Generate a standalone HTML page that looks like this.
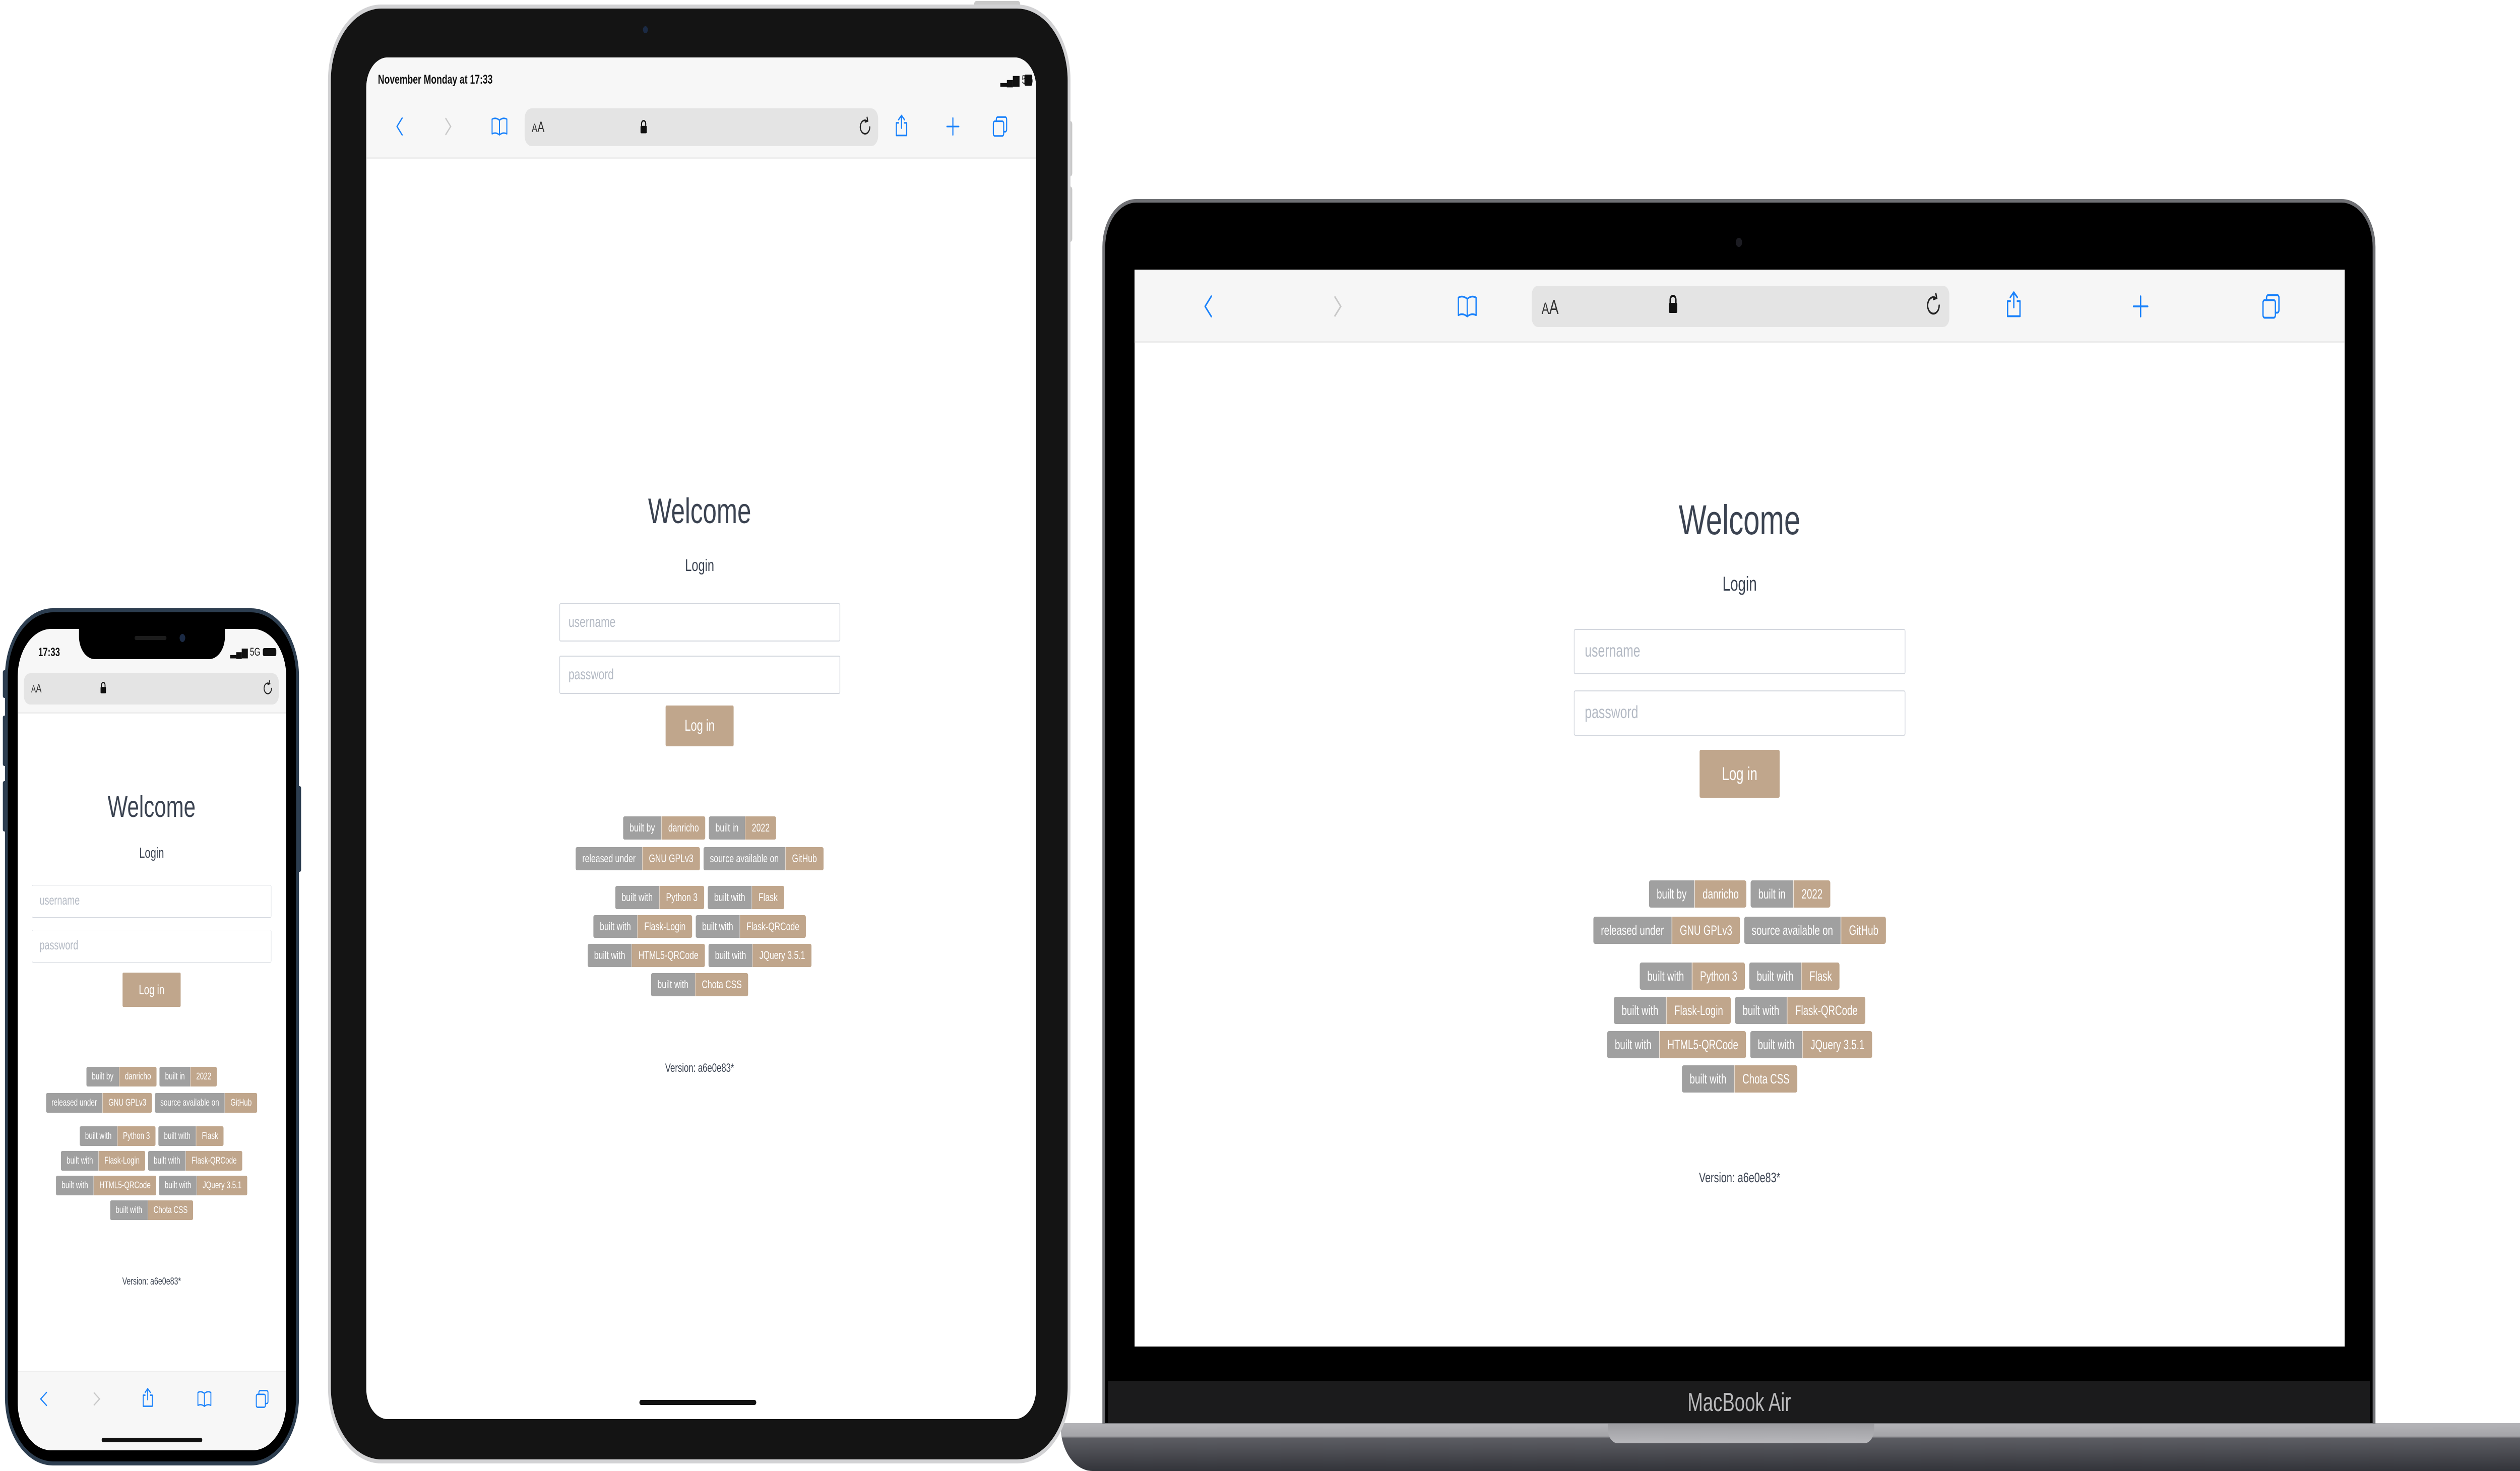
<!DOCTYPE html>
<html><head><meta charset="utf-8">
<style>
*{box-sizing:border-box;margin:0;padding:0}
html,body{width:100%;height:100%;background:#fff;overflow:hidden;font-family:"Liberation Sans",sans-serif}
#wrap{position:absolute;left:0;top:0;width:7114px;height:2919px;overflow:hidden;transform-origin:0 0}
.abs{position:absolute}
.app{position:absolute;width:calc(var(--u)*26);margin-left:calc(var(--u)*-13);color:#3b4351}
.app .t{position:absolute;left:0;width:100%;text-align:center;line-height:1;white-space:nowrap}
.app .h1{font-size:calc(var(--u)*2.3);top:calc(var(--u)*-1.2)}
.app .h2{font-size:calc(var(--u)*1.1);top:calc(var(--u)*2.95)}
.app .in{position:absolute;left:0;width:100%;height:calc(var(--u)*2.5);border:calc(var(--u)*0.07) solid #d3d7de;border-radius:calc(var(--u)*0.12);font-size:calc(var(--u)*0.98);color:#b4bac4;padding-left:calc(var(--u)*0.8);line-height:calc(var(--u)*2.36)}
.app .btn{position:absolute;left:calc(var(--u)*9.85);width:calc(var(--u)*6.3);height:calc(var(--u)*2.64);top:calc(var(--u)*12.6);background:#c0a68c;color:#fff;border-radius:calc(var(--u)*0.1);text-align:center;font-size:calc(var(--u)*1.02);line-height:calc(var(--u)*2.64)}
.app .row{position:absolute;left:calc(var(--u)*-6);width:calc(var(--u)*38);display:flex;justify-content:center;gap:calc(var(--u)*0.33);height:calc(var(--u)*1.5)}
.b{display:flex;height:100%;border-radius:calc(var(--u)*0.14);overflow:hidden;font-size:calc(var(--u)*0.74);color:#fff;line-height:calc(var(--u)*1.5);white-space:nowrap}
.b span{padding:0 calc(var(--u)*0.6);background:#a0a0a0}
.b span+span{background:#c0a68c;border-left:calc(var(--u)*0.06) solid #ece4dc}
.app .ver{font-size:calc(var(--u)*0.78);top:calc(var(--u)*35.8)}
svg{position:absolute;overflow:visible}
.ic{fill:none;stroke:#1a82fb;stroke-linecap:round;stroke-linejoin:round}
</style></head><body><div id="wrap">

<!-- ================= MACBOOK ================= -->
<div class="abs" style="left:2994px;top:2824px;width:4120px;height:95px;border-radius:0 0 0 90px;background:linear-gradient(#b4b4b8 0,#a4a4a8 26px,#5c5d63 30px,#4a4b51 60px,#33343a 95px)"></div>
<div class="abs" style="left:4539px;top:2824px;width:752px;height:40px;border-radius:0 0 28px 28px;background:linear-gradient(#9c9ca0,#b8b8bc)"></div>
<div class="abs" style="left:3112px;top:395px;width:3594px;height:2430px;border-radius:95px 95px 0 0;background:#6f7074"></div>
<div class="abs" style="left:3120px;top:402px;width:3578px;height:2422px;border-radius:88px 88px 0 0;background:#000"></div>
<div class="abs" style="left:3128px;top:2740px;width:3562px;height:84px;background:#1b1b1c"></div>
<div class="abs" style="left:4600px;top:2748px;width:620px;text-align:center;color:#b9b9bb;font-size:52px;line-height:70px">MacBook Air</div>
<div class="abs" style="left:4900px;top:472px;width:18px;height:18px;border-radius:50%;background:#1c1c22"></div>
<div class="abs" style="left:3203px;top:535px;width:3416px;height:2137px;background:#fff"></div>
<div class="abs" style="left:3203px;top:535px;width:3416px;height:145px;background:#f6f6f6;border-bottom:3px solid #ececec"></div>
<div class="abs" style="left:4324px;top:567px;width:1179px;height:82px;background:#e4e4e4;border-radius:18px"></div>
<div class="abs" style="left:4352px;top:588px;font-size:32px;color:#333">A<span style="font-size:40px">A</span></div>
<svg style="left:4708px;top:585px" width="30" height="38" viewBox="0 0 30 38"><path d="M7 16V10a8 8 0 0 1 16 0v6" fill="none" stroke="#111" stroke-width="4"/><rect x="3" y="16" width="24" height="20" rx="3" fill="#111"/></svg>
<svg style="left:5430px;top:578px" width="56" height="56" viewBox="0 0 24 24"><path d="M19 12a7 7 0 1 1-4-6.3M15 2l1 3.8-3.8 1" fill="none" stroke="#222" stroke-width="1.6" stroke-linecap="round"/></svg>
<svg style="left:3382px;top:578px" width="60" height="60" viewBox="0 0 24 24"><path class="ic" stroke-width="1.5" d="M15 4L8 12l7 8"/></svg>
<svg style="left:3745px;top:578px" width="60" height="60" viewBox="0 0 24 24"><path style="fill:none;stroke:#c8c8c8" stroke-width="1.5" d="M9 4l7 8-7 8"/></svg>
<svg style="left:4110px;top:578px" width="64" height="60" viewBox="0 0 24 24"><path class="ic" stroke-width="1.4" d="M2 5q5-2 10 1q5-3 10-1v14q-5-2-10 1q-5-3-10-1zM12 6v14"/></svg>
<svg style="left:5655px;top:572px" width="60" height="66" viewBox="0 0 24 24"><path class="ic" stroke-width="1.5" d="M8 9H5v12h14V9h-3M12 14V2M8 6l4-4 4 4"/></svg>
<svg style="left:6013px;top:578px" width="60" height="60" viewBox="0 0 24 24"><path class="ic" stroke-width="1.5" d="M12 4v16M4 12h16"/></svg>
<svg style="left:6381px;top:578px" width="60" height="60" viewBox="0 0 24 24"><rect class="ic" stroke-width="1.5" x="3" y="7" width="14" height="14" rx="2"/><path class="ic" stroke-width="1.5" d="M7 7V5a2 2 0 0 1 2-2h10a2 2 0 0 1 2 2v10a2 2 0 0 1-2 2h-2"/></svg>

<div class="app" style="--u:36px;left:4911px;top:1034px">
 <div class="t h1">Welcome</div><div class="t h2">Login</div>
 <div class="in" style="top:calc(var(--u)*5.94)">username</div>
 <div class="in" style="top:calc(var(--u)*9.33)">password</div>
 <div class="btn">Log in</div>
 <div class="row" style="top:calc(var(--u)*19.8)"><div class="b"><span>built by</span><span>danricho</span></div><div class="b"><span>built in</span><span>2022</span></div></div>
 <div class="row" style="top:calc(var(--u)*21.8)"><div class="b"><span>released under</span><span>GNU GPLv3</span></div><div class="b"><span>source available on</span><span>GitHub</span></div></div>
 <div class="row" style="top:calc(var(--u)*24.33)"><div class="b"><span>built with</span><span>Python 3</span></div><div class="b"><span>built with</span><span>Flask</span></div></div>
 <div class="row" style="top:calc(var(--u)*26.22)"><div class="b"><span>built with</span><span>Flask-Login</span></div><div class="b"><span>built with</span><span>Flask-QRCode</span></div></div>
 <div class="row" style="top:calc(var(--u)*28.11)"><div class="b"><span>built with</span><span>HTML5-QRCode</span></div><div class="b"><span>built with</span><span>JQuery 3.5.1</span></div></div>
 <div class="row" style="top:calc(var(--u)*30.0)"><div class="b"><span>built with</span><span>Chota CSS</span></div></div>
 <div class="t ver">Version: a6e0e83*</div>
</div>

<!-- ================= IPAD ================= -->
<div class="abs" style="left:2750px;top:2px;width:130px;height:14px;border-radius:6px;background:#c9c9c9"></div>
<div class="abs" style="left:3015px;top:240px;width:12px;height:110px;border-radius:6px;background:#c9c9c9"></div>
<div class="abs" style="left:3015px;top:370px;width:12px;height:110px;border-radius:6px;background:#c9c9c9"></div>
<div class="abs" style="left:926px;top:9px;width:2096px;height:2895px;border-radius:150px;background:#d2d2d4"></div>
<div class="abs" style="left:934px;top:17px;width:2080px;height:2879px;border-radius:143px;background:#141414"></div>
<div class="abs" style="left:1815px;top:52px;width:14px;height:14px;border-radius:50%;background:#1b2a44"></div>
<div class="abs" style="left:1034px;top:114px;width:1891px;height:2702px;border-radius:60px;background:#fff;overflow:hidden">
 <div class="abs" style="left:0;top:0;width:100%;height:201px;background:#f7f7f7;border-bottom:4px solid #eeeeee"></div>
 <div class="abs" style="left:33px;top:30px;font-size:25px;font-weight:bold;color:#111">November Monday at 17:33</div>
 <div class="abs" style="left:1790px;top:30px;font-size:24px;color:#111">▂▄▆ 5G</div>
 <div class="abs" style="left:1858px;top:34px;width:22px;height:22px;background:#111;border-radius:3px"></div>
 <div class="abs" style="left:447px;top:101px;width:998px;height:75px;background:#e4e4e4;border-radius:20px"></div>
 <div class="abs" style="left:467px;top:122px;font-size:24px;color:#333">A<span style="font-size:30px">A</span></div>
 <svg style="left:772px;top:122px" width="22" height="32" viewBox="0 0 30 38"><path d="M7 16V10a8 8 0 0 1 16 0v6" fill="none" stroke="#111" stroke-width="4"/><rect x="3" y="16" width="24" height="20" rx="3" fill="#111"/></svg>
 <svg style="left:1385px;top:115px" width="46" height="46" viewBox="0 0 24 24"><path d="M19 12a7 7 0 1 1-4-6.3M15 2l1 3.8-3.8 1" fill="none" stroke="#222" stroke-width="1.6" stroke-linecap="round"/></svg>
 <svg style="left:70px;top:112px" width="50" height="50" viewBox="0 0 24 24"><path class="ic" stroke-width="1.5" d="M15 4L8 12l7 8"/></svg>
 <svg style="left:205px;top:112px" width="50" height="50" viewBox="0 0 24 24"><path style="fill:none;stroke:#c8c8c8" stroke-width="1.5" d="M9 4l7 8-7 8"/></svg>
 <svg style="left:350px;top:112px" width="52" height="50" viewBox="0 0 24 24"><path class="ic" stroke-width="1.4" d="M2 5q5-2 10 1q5-3 10-1v14q-5-2-10 1q-5-3-10-1zM12 6v14"/></svg>
 <svg style="left:1486px;top:108px" width="50" height="56" viewBox="0 0 24 24"><path class="ic" stroke-width="1.5" d="M8 9H5v12h14V9h-3M12 14V2M8 6l4-4 4 4"/></svg>
 <svg style="left:1631px;top:112px" width="50" height="50" viewBox="0 0 24 24"><path class="ic" stroke-width="1.5" d="M12 4v16M4 12h16"/></svg>
 <svg style="left:1764px;top:112px" width="50" height="50" viewBox="0 0 24 24"><rect class="ic" stroke-width="1.5" x="3" y="7" width="14" height="14" rx="2"/><path class="ic" stroke-width="1.5" d="M7 7V5a2 2 0 0 1 2-2h10a2 2 0 0 1 2 2v10a2 2 0 0 1-2 2h-2"/></svg>
 <div class="abs" style="left:771px;top:2664px;width:330px;height:10px;border-radius:5px;background:#111"></div>
</div>
<div class="app" style="--u:30.5px;left:1975px;top:1016px">
 <div class="t h1">Welcome</div><div class="t h2">Login</div>
 <div class="in" style="top:calc(var(--u)*5.94)">username</div>
 <div class="in" style="top:calc(var(--u)*9.33)">password</div>
 <div class="btn">Log in</div>
 <div class="row" style="top:calc(var(--u)*19.8)"><div class="b"><span>built by</span><span>danricho</span></div><div class="b"><span>built in</span><span>2022</span></div></div>
 <div class="row" style="top:calc(var(--u)*21.8)"><div class="b"><span>released under</span><span>GNU GPLv3</span></div><div class="b"><span>source available on</span><span>GitHub</span></div></div>
 <div class="row" style="top:calc(var(--u)*24.33)"><div class="b"><span>built with</span><span>Python 3</span></div><div class="b"><span>built with</span><span>Flask</span></div></div>
 <div class="row" style="top:calc(var(--u)*26.22)"><div class="b"><span>built with</span><span>Flask-Login</span></div><div class="b"><span>built with</span><span>Flask-QRCode</span></div></div>
 <div class="row" style="top:calc(var(--u)*28.11)"><div class="b"><span>built with</span><span>HTML5-QRCode</span></div><div class="b"><span>built with</span><span>JQuery 3.5.1</span></div></div>
 <div class="row" style="top:calc(var(--u)*30.0)"><div class="b"><span>built with</span><span>Chota CSS</span></div></div>
 <div class="t ver">Version: a6e0e83*</div>
</div>

<!-- ================= IPHONE ================= -->
<div class="abs" style="left:8px;top:1330px;width:10px;height:55px;border-radius:4px;background:#2c3d50"></div>
<div class="abs" style="left:8px;top:1420px;width:10px;height:100px;border-radius:4px;background:#2c3d50"></div>
<div class="abs" style="left:8px;top:1550px;width:10px;height:100px;border-radius:4px;background:#2c3d50"></div>
<div class="abs" style="left:840px;top:1560px;width:10px;height:170px;border-radius:4px;background:#2c3d50"></div>
<div class="abs" style="left:14px;top:1207px;width:830px;height:1701px;border-radius:135px;background:#2d3e50"></div>
<div class="abs" style="left:22px;top:1215px;width:814px;height:1685px;border-radius:128px;background:#000"></div>
<div class="abs" style="left:50px;top:1248px;width:758px;height:1630px;border-radius:95px;background:#fff;overflow:hidden">
 <div class="abs" style="left:0;top:0;width:100%;height:168px;background:#f7f7f7;border-bottom:3px solid #eee"></div>
 <div class="abs" style="left:173px;top:-5px;width:412px;height:65px;border-radius:0 0 45px 45px;background:#000"></div>
 <div class="abs" style="left:330px;top:14px;width:90px;height:8px;border-radius:4px;background:#1c1c1c"></div>
 <div class="abs" style="left:457px;top:10px;width:16px;height:16px;border-radius:50%;background:#1b2a44"></div>
 <div class="abs" style="left:58px;top:33px;font-size:24px;font-weight:bold;color:#111">17:33</div>
 <div class="abs" style="left:600px;top:33px;font-size:22px;color:#111">▂▄▆ 5G</div>
 <div class="abs" style="left:692px;top:38px;width:38px;height:16px;border-radius:4px;background:#111"></div>
 <div class="abs" style="left:17px;top:88px;width:720px;height:62px;background:#e4e4e4;border-radius:18px"></div>
 <div class="abs" style="left:38px;top:105px;font-size:20px;color:#333">A<span style="font-size:24px">A</span></div>
 <svg style="left:232px;top:104px" width="19" height="26" viewBox="0 0 30 38"><path d="M7 16V10a8 8 0 0 1 16 0v6" fill="none" stroke="#111" stroke-width="4"/><rect x="3" y="16" width="24" height="20" rx="3" fill="#111"/></svg>
 <svg style="left:688px;top:100px" width="36" height="36" viewBox="0 0 24 24"><path d="M19 12a7 7 0 1 1-4-6.3M15 2l1 3.8-3.8 1" fill="none" stroke="#222" stroke-width="1.6" stroke-linecap="round"/></svg>
 <div class="abs" style="left:0;top:1472px;width:100%;height:158px;background:#f7f7f7;border-top:3px solid #eee"></div>
 <svg style="left:52px;top:1506px" width="44" height="44" viewBox="0 0 24 24"><path class="ic" stroke-width="1.5" d="M16 5L7 12l9 7"/></svg>
 <svg style="left:200px;top:1506px" width="44" height="44" viewBox="0 0 24 24"><path style="fill:none;stroke:#c8c8c8" stroke-width="1.5" d="M8 5l9 7-9 7"/></svg>
 <svg style="left:345px;top:1502px" width="44" height="48" viewBox="0 0 24 24"><path class="ic" stroke-width="1.5" d="M8 9H5v12h14V9h-3M12 14V2M8 6l4-4 4 4"/></svg>
 <svg style="left:503px;top:1506px" width="48" height="44" viewBox="0 0 24 24"><path class="ic" stroke-width="1.4" d="M2 5q5-2 10 1q5-3 10-1v14q-5-2-10 1q-5-3-10-1zM12 6v14"/></svg>
 <svg style="left:668px;top:1506px" width="44" height="44" viewBox="0 0 24 24"><rect class="ic" stroke-width="1.5" x="3" y="7" width="14" height="14" rx="2"/><path class="ic" stroke-width="1.5" d="M7 7V5a2 2 0 0 1 2-2h10a2 2 0 0 1 2 2v10a2 2 0 0 1-2 2h-2"/></svg>
 <div class="abs" style="left:237px;top:1605px;width:284px;height:9px;border-radius:5px;background:#111"></div>
</div>
<div class="app" style="--u:26px;left:428px;top:1602px">
 <div class="t h1">Welcome</div><div class="t h2">Login</div>
 <div class="in" style="top:calc(var(--u)*5.94)">username</div>
 <div class="in" style="top:calc(var(--u)*9.33)">password</div>
 <div class="btn">Log in</div>
 <div class="row" style="top:calc(var(--u)*19.8)"><div class="b"><span>built by</span><span>danricho</span></div><div class="b"><span>built in</span><span>2022</span></div></div>
 <div class="row" style="top:calc(var(--u)*21.8)"><div class="b"><span>released under</span><span>GNU GPLv3</span></div><div class="b"><span>source available on</span><span>GitHub</span></div></div>
 <div class="row" style="top:calc(var(--u)*24.33)"><div class="b"><span>built with</span><span>Python 3</span></div><div class="b"><span>built with</span><span>Flask</span></div></div>
 <div class="row" style="top:calc(var(--u)*26.22)"><div class="b"><span>built with</span><span>Flask-Login</span></div><div class="b"><span>built with</span><span>Flask-QRCode</span></div></div>
 <div class="row" style="top:calc(var(--u)*28.11)"><div class="b"><span>built with</span><span>HTML5-QRCode</span></div><div class="b"><span>built with</span><span>JQuery 3.5.1</span></div></div>
 <div class="row" style="top:calc(var(--u)*30.0)"><div class="b"><span>built with</span><span>Chota CSS</span></div></div>
 <div class="t ver">Version: a6e0e83*</div>
</div>

</div>
<script>
(function(){
 var w=document.getElementById('wrap');
 function fit(){
  var vw=document.documentElement.clientWidth||window.innerWidth;
  var vh=document.documentElement.clientHeight||window.innerHeight;
  var sx=vw/7114, sy=vh/2919;
  if(Math.abs(sx-1)<0.002&&Math.abs(sy-1)<0.002){w.style.transform='none';return;}
  w.style.transform='scale('+sx+','+sy+')';
 }
 fit(); window.addEventListener('resize',fit);
})();
</script>
</body></html>
